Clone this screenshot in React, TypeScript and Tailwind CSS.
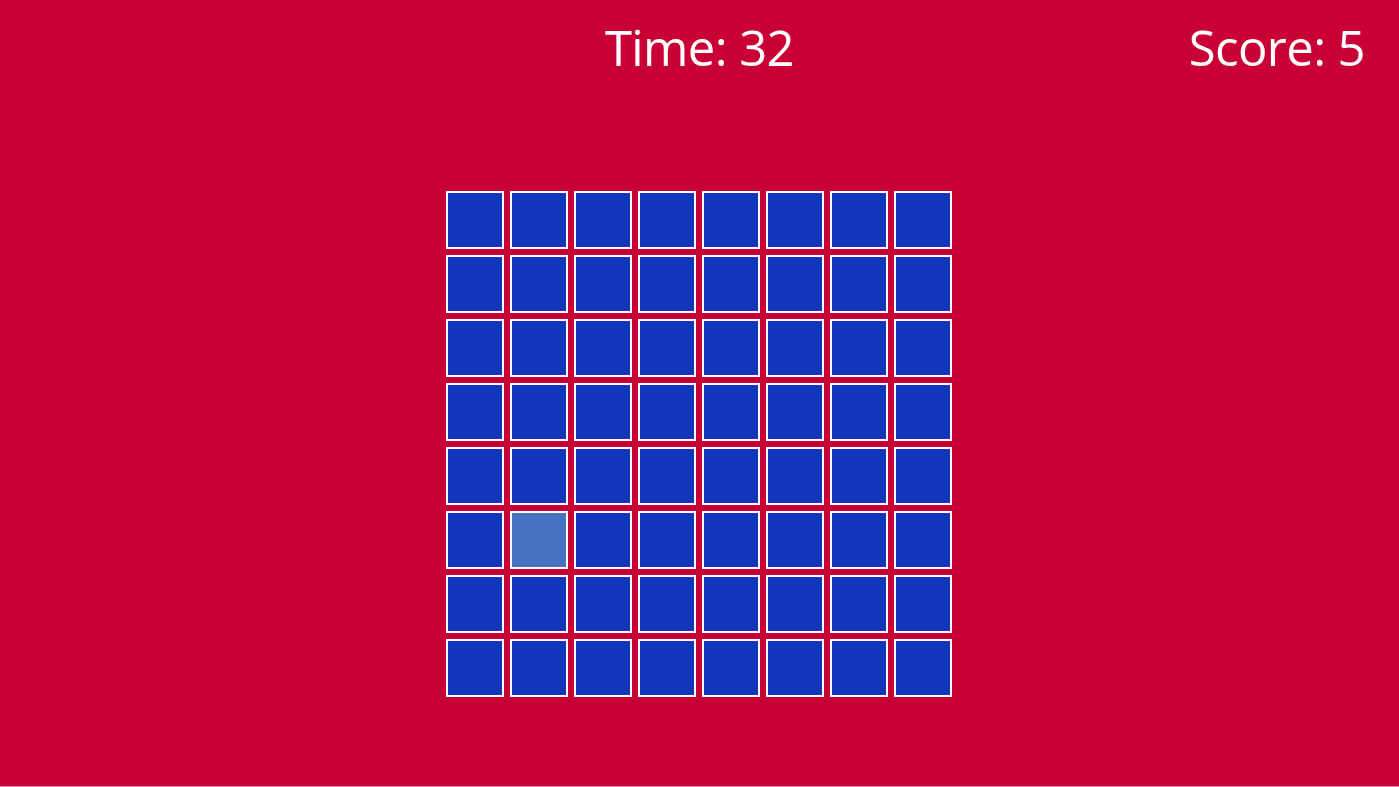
import React from "react";

export default function App() {
  const cells = Array.from({ length: 64 }, (_, i) => i);
  return (
    <div className="w-[1399px] h-[787px] bg-[#c80035] flex flex-col overflow-hidden" style={{ fontFamily: '"Open Sans", "Noto Sans", sans-serif' }}>
      <div className="relative h-[100px] text-white text-[49px] tracking-[-0.6px] leading-none">
        <div className="absolute left-0 right-0 top-[23px] text-center">Time: 32</div>
        <div className="absolute right-[34px] top-[23px]">Score: 5</div>
      </div>
      <div className="flex-1 flex flex-col items-center pt-[91px]">
        <div className="grid grid-cols-[repeat(8,58px)] grid-rows-[repeat(8,58px)] gap-[6px] mr-px">
          {cells.map((i) => (
            <div
              key={i}
              className={
                "border-2 border-white " + (i === 41 ? "bg-[#4673c2]" : "bg-[#1236be]")
              }
            />
          ))}
        </div>
      </div>
      <div className="h-px bg-[#f08aa8]" />
    </div>
  );
}
